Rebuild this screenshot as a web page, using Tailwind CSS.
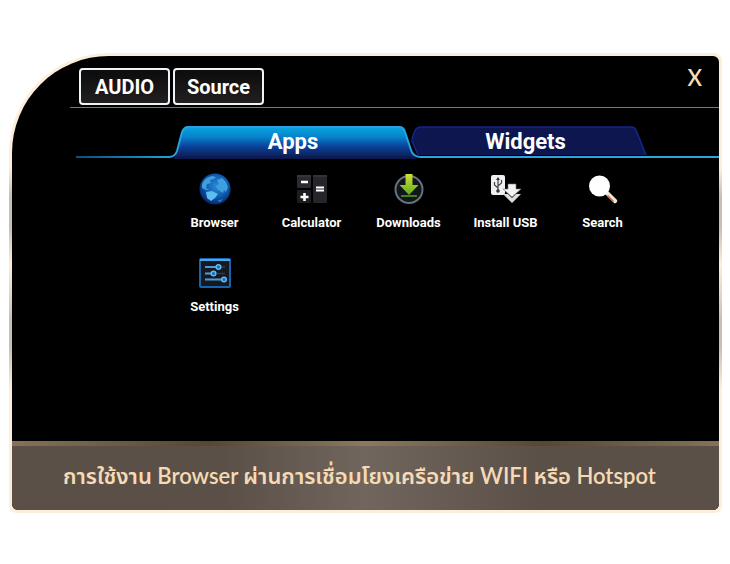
<!DOCTYPE html>
<html lang="th">
<head>
    <meta charset="UTF-8">
    <meta name="viewport" content="width=device-width, initial-scale=1.0">
    <title>Browser</title>
    <script src="https://cdn.jsdelivr.net/npm/@tailwindcss/browser@4"></script>
</head>
<body class="bg-white pt-[53px] pb-[51px] pl-[9px] pr-2">
    <!-- cream frame -->
    <main class="bg-[linear-gradient(180deg,#fdeedb_25%,#c8bfb3_31%,#c8bfb3_38%,#fdeedb_46%,#c8bfb3_58%,#c8bfb3_64%,#fdeedb_73%)] p-[3px] rounded-lg rounded-tl-[100px]">
        <div class="bg-black rounded-md rounded-tl-[97px] overflow-hidden font-['Roboto',sans-serif] font-bold text-white">
            <header class="flex items-start justify-between ml-[58px] pl-[9px] pt-3 pb-[2px] border-b border-[#77757f]">
                <div class="flex gap-[3px]">
                    <button class="w-[91px] h-[37px] border-2 border-[#eef3f8] rounded-sm bg-linear-to-b from-[#0c0c0c] to-[#231f20] text-xl">AUDIO</button>
                    <button class="w-[91px] h-[37px] border-2 border-[#eef3f8] rounded-sm bg-linear-to-b from-[#0c0c0c] to-[#231f20] text-xl">Source</button>
                </div>
                <button class="mr-[17px] text-[#f5dab5] text-[22px] font-semibold leading-5 font-['Lato',sans-serif]" aria-label="Close">X</button>
            </header>

            <nav class="flex items-end mt-[17px] ml-16 h-[34px]">
                <span class="w-[93px] h-[2px] mb-px bg-linear-to-r from-[#0b4f80] to-[#1fa0dc]"></span>
                <button class="relative w-[252px] h-[34px] pr-1 text-[22px] leading-[34px]">
                    <svg class="absolute inset-0" width="252" height="34" viewBox="0 0 252 34" fill="none">
                        <defs>
                            <linearGradient id="apps" x1="0" y1="0" x2="0" y2="1">
                                <stop offset="0" stop-color="#08a4e0"/>
                                <stop offset=".3" stop-color="#0784cc"/>
                                <stop offset=".6" stop-color="#0a439c"/>
                                <stop offset="1" stop-color="#0e1547"/>
                            </linearGradient>
                        </defs>
                        <path d="M4 34Q7 31 8 27L13 7Q15 2 19 2H230Q235 2 236 7L242 26Q244 31 248 34Z" fill="url(#apps)"/>
                        <path d="M0 32Q6 32 8 26L13 7Q15 2 19 2H230Q235 2 236 7L242 25Q244 32 252 32" stroke="#25a3de" stroke-width="2"/>
                    </svg>
                    <span class="relative">Apps</span>
                </button>
                <button class="relative w-[237px] h-[34px] -ml-[10px] pr-2 text-[22px] leading-[34px]">
                    <svg class="absolute inset-0" width="237" height="34" viewBox="0 0 237 34" fill="none">
                        <path d="M7 30L1 16Q1 12 3 8Q5 2 9 2H220Q224 2 225 5L235 30Z" fill="#0e1650"/>
                        <path d="M7 30L1 16Q1 12 3 8Q5 2 9 2H220Q224 2 225 5L235 30" stroke="#15258a" stroke-width="1.5"/>
                        <path d="M10 32H237" stroke="#2ba5dc" stroke-width="2"/>
                    </svg>
                    <span class="relative">Widgets</span>
                </button>
                <span class="flex-1 h-[2px] mb-px bg-[#2ba5dc]"></span>
            </nav>

            <ul class="flex flex-wrap gap-y-[26px] h-[282px] content-start pt-[14px] pl-[154px] pr-[60px] text-[13px] leading-4 text-center">
                <li class="w-[97px]">
                    <a href="#" class="flex flex-col items-center gap-[10px]">
                        <svg width="34" height="32" viewBox="0 0 34 32">
                            <defs>
                                <radialGradient id="globe" cx=".55" cy=".4" r=".6">
                                    <stop offset="0" stop-color="#2a8cd6"/>
                                    <stop offset=".6" stop-color="#0d5bb0"/>
                                    <stop offset="1" stop-color="#07276a"/>
                                </radialGradient>
                            </defs>
                            <circle cx="17" cy="16" r="15.500" fill="url(#globe)"/>
                            <path d="M4 11Q7 4 14 3L18 4L16 6L12 7L13 10L9 11L8 15L11 17L8 17L4 15Z" fill="#3f9fdd"/>
                            <path d="M8 19L14 18L20 21L17 25L13 28L9 25Z" fill="#5cbdf0"/>
                            <path d="M19 7L24 5L28 9L30 14L28 19L26 17L25 20L22 18L19 16L18 13L21 11Z" fill="#3f9fdd"/>
                            <path d="M19 28L25 26L22 29Z" fill="#2f88cc"/>
                        </svg>
                        <span>Browser</span>
                    </a>
                </li>
                <li class="w-[97px]">
                    <a href="#" class="flex flex-col items-center gap-[10px]">
                        <svg width="32" height="32" viewBox="0 0 32 32">
                            <rect x="1" y="2" width="14" height="13" rx="1" fill="#2c2a30"/>
                            <rect x="1" y="17" width="14" height="13" rx="1" fill="#1d1c21"/>
                            <rect x="17" y="2" width="14" height="28" rx="1" fill="#26252b"/>
                            <path d="M1 3H15M17 3H31" stroke="#45434b"/>
                            <path d="M5 9H12M8.500 20V28M4.500 24H12.500" stroke="#fff" stroke-width="2.600"/>
                            <path d="M20 14.500H28M20 17.500H28" stroke="#fff" stroke-width="2.200"/>
                        </svg>
                        <span>Calculator</span>
                    </a>
                </li>
                <li class="w-[97px]">
                    <a href="#" class="flex flex-col items-center gap-[10px]">
                        <svg width="32" height="32" viewBox="0 0 32 32">
                            <defs>
                                <linearGradient id="arrow" x1="0" y1="0" x2="0" y2="1">
                                    <stop offset="0" stop-color="#d3e034"/>
                                    <stop offset="1" stop-color="#5cae1c"/>
                                </linearGradient>
                            </defs>
                            <circle cx="16" cy="16.500" r="13.500" fill="#11161a" stroke="#66727d" stroke-width="2"/>
                            <path d="M12.500 1H19.500V12H25.500L16 22L6.500 12H12.500Z" fill="url(#arrow)"/>
                            <path d="M8 23H24" stroke="#57a51d" stroke-width="1.500"/>
                        </svg>
                        <span>Downloads</span>
                    </a>
                </li>
                <li class="w-[97px]">
                    <a href="#" class="flex flex-col items-center gap-[10px]">
                        <svg width="32" height="32" viewBox="0 0 32 32">
                            <rect x="1" y="2" width="14" height="20" rx="2" fill="#f0f0f3"/>
                            <path d="M8 5V18M8 15L4.500 12V9M8 13L11.500 10V7" fill="none" stroke="#444" stroke-width="1.200"/>
                            <path d="M6 7L8 4L10 7Z" fill="#333"/>
                            <circle cx="8" cy="18" r="1.800" fill="#333"/>
                            <path d="M13 21H18L22 25L26 21H31L22 30Z" fill="#dcdce0"/>
                            <path d="M18 11H26V16H31L22 24L13 16H18Z" fill="#f2f2f4" stroke="#77777d" stroke-width=".6"/>
                        </svg>
                        <span>Install USB</span>
                    </a>
                </li>
                <li class="w-[97px]">
                    <a href="#" class="flex flex-col items-center gap-[10px]">
                        <svg width="32" height="32" viewBox="0 0 32 32">
                            <path d="M20 20L28 28" stroke="#f0e4dc" stroke-width="4.500" stroke-linecap="round"/>
                            <path d="M20.500 22.500L26.500 28.500" stroke="#cf6a30" stroke-width="1.500"/>
                            <circle cx="12.500" cy="13" r="10.500" fill="#fff"/>
                        </svg>
                        <span>Search</span>
                    </a>
                </li>
                <li class="w-[97px]">
                    <a href="#" class="flex flex-col items-center gap-[10px]">
                        <svg width="34" height="32" viewBox="0 0 34 32">
                            <rect x="2" y="2" width="30" height="28" rx="1" fill="#16191f" stroke="#1763ae" stroke-width="2"/>
                            <path d="M2 3H32" stroke="#49a8ea" stroke-width="2"/>
                            <path d="M7 10H27M7 16.500H27M7 22.500H27" stroke="#2c3d4f" stroke-width="1.500"/>
                            <path d="M7 10H19M7 16.500H14M7 22.500H25" stroke="#4c9ad8" stroke-width="2"/>
                            <g fill="#1668b8" stroke="#5cbcf2" stroke-width="1.500">
                                <circle cx="20.500" cy="10" r="2.300"/>
                                <circle cx="15.500" cy="16.500" r="2.300"/>
                                <circle cx="26" cy="22.500" r="2.300"/>
                            </g>
                        </svg>
                        <span>Settings</span>
                    </a>
                </li>
            </ul>

            <footer class="bg-linear-to-r from-[#5b5047] from-30% via-[#70665e] to-[#5b5047] to-75%">
                <div class="h-[5px] bg-[linear-gradient(90deg,#857258,#574631_28%,#8c795f_50%,#574631_75%,#857258)]"></div>
                <p class="h-16 leading-[60px] pl-[51px] whitespace-nowrap text-[22px] font-semibold text-[#f5dab5] font-['Lato','Noto_Sans_Thai',sans-serif]">การใช้งาน Browser ผ่านการเชื่อมโยงเครือข่าย WIFI หรือ Hotspot</p>
            </footer>
        </div>
    </main>
</body>
</html>
